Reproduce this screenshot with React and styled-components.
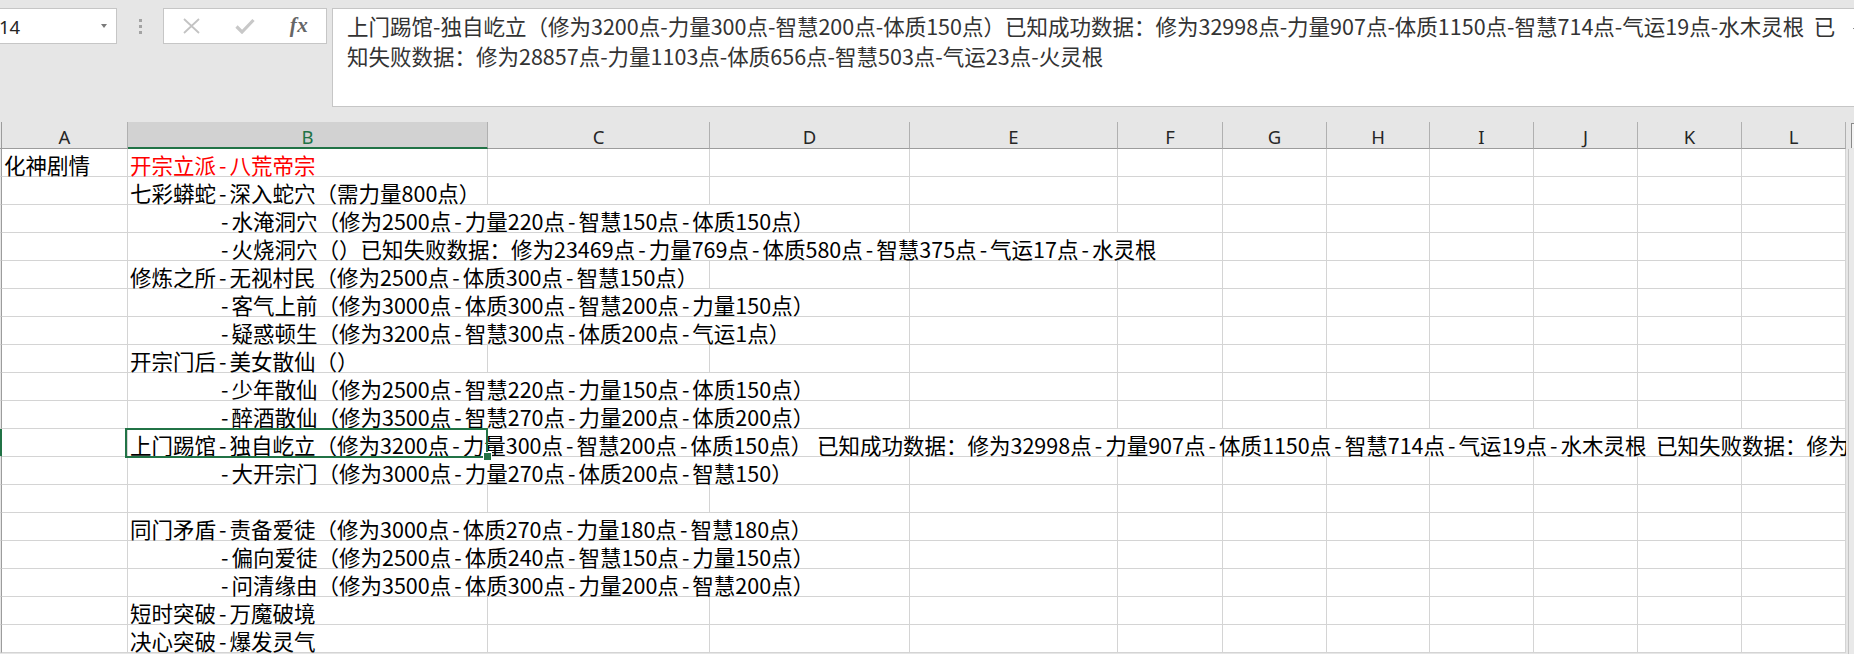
import React from "react";
import styled, { createGlobalStyle } from "styled-components";

const GlobalStyle = createGlobalStyle`
  html, body { margin: 0; padding: 0; background: #e6e6e6; }
  body { font-family: "Noto Sans CJK SC", "Noto Sans", sans-serif; }
  * { box-sizing: border-box; }
`;

const COLS = "2px 126px 360px 222px 200px 208px 105px 104px 103px 104px 104px 104px 104px";
const LETTERS = ["A", "B", "C", "D", "E", "F", "G", "H", "I", "J", "K", "L"];
const GREEN = "#217346";

const Page = styled.div`
  width: 1854px;
  height: 654px;
  overflow: hidden;
  background: #e6e6e6;
  display: flex;
  flex-direction: column;
`;

const TopBar = styled.div`
  height: 122px;
  flex: none;
  display: flex;
  align-items: flex-start;
  padding-top: 8px;
`;

const NameBox = styled.div`
  width: 117px;
  height: 36px;
  flex: none;
  background: #fff;
  border: 1px solid #c6c6c6;
  border-left: none;
  display: flex;
  align-items: center;
  justify-content: space-between;
  padding-right: 9px;
  font-family: "Noto Sans", sans-serif;
  font-size: 18.5px;
  color: #262626;
`;

const NameText = styled.span`
  margin-left: -1px;
`;

const DropArrow = styled.span`
  width: 0;
  height: 0;
  border-left: 3.5px solid transparent;
  border-right: 3.5px solid transparent;
  border-top: 4px solid #7a7a7a;
`;

const Grip = styled.div`
  width: 46px;
  height: 36px;
  flex: none;
  display: flex;
  flex-direction: column;
  align-items: center;
  justify-content: center;
  gap: 3px;
`;

const GripDot = styled.span`
  width: 3px;
  height: 3px;
  background: #a3a3a3;
`;

const FxBox = styled.div`
  width: 164px;
  height: 36px;
  flex: none;
  background: #fff;
  border: 1px solid #c6c6c6;
  display: grid;
  grid-template-columns: repeat(3, 1fr);
  align-items: center;
  justify-items: center;
`;

const FxLabel = styled.span`
  font-family: "Liberation Serif", "DejaVu Serif", serif;
  font-style: italic;
  font-weight: 700;
  font-size: 21px;
  color: #666;
  letter-spacing: 0.5px;
  margin-top: -2px;
`;

const FormulaBox = styled.div`
  flex: 1;
  height: 99px;
  margin-left: 5px;
  margin-right: -4px;
  background: #fff;
  border: 1px solid #c6c6c6;
  padding: 2px 0 0 14px;
  overflow: hidden;
  display: flex;
`;

const FormulaText = styled.div`
  flex: 1;
  font-family: "Noto Sans CJK SC", sans-serif;
  font-size: 21.5px;
  line-height: 29.5px;
  color: #333;
  white-space: pre;
  overflow: hidden;
`;

const FormulaScroll = styled.div`
  width: 10px;
  flex: none;
  padding-top: 17px;
  display: flex;
  justify-content: flex-end;
`;

const ScrollTick = styled.span`
  width: 4px;
  height: 1px;
  background: #8a8a8a;
`;

const SheetArea = styled.div`
  flex: 1;
  display: flex;
  min-height: 0;
`;

const Sheet = styled.div`
  width: 1846px;
  flex: none;
  overflow: hidden;
  display: flex;
  flex-direction: column;
`;

const HeaderRow = styled.div`
  display: grid;
  grid-template-columns: ${COLS};
  grid-template-rows: 27px;
  height: 27px;
  flex: none;
`;

const ColHeader = styled.div`
  background: ${(p) => (p.$active ? "#d2d2d2" : "#e6e6e6")};
  border-right: 1px solid #b0b0b0;
  border-bottom: ${(p) => (p.$active ? `2px solid ${GREEN}` : "1px solid #9c9c9c")};
  text-align: center;
  font-family: "Noto Sans", sans-serif;
  font-size: 18.5px;
  line-height: 23px;
  padding-top: 3px;
  overflow: hidden;
  color: ${(p) => (p.$active ? GREEN : "#262626")};
`;

const RowStub = styled.div`
  background: ${(p) => (p.$active ? GREEN : "#e6e6e6")};
  border-right: 1px solid ${(p) => (p.$active ? GREEN : "#9c9c9c")};
  border-bottom: 1px solid ${(p) => (p.$header ? "#9c9c9c" : "#d4d4d4")};
`;

const BodyRow = styled.div`
  display: grid;
  grid-template-columns: ${COLS};
  grid-template-rows: 28px;
  height: 28px;
  flex: none;
`;

const Cell = styled.div`
  grid-column: span ${(p) => p.$span || 1};
  position: relative;
  min-width: 0;
  height: 28px;
  background: #fff;
  border-right: 1px solid #d4d4d4;
  border-bottom: 1px solid #d4d4d4;
  padding: 2.5px 0 0 ${(p) => (p.$indent ? 90 : 2)}px;
  font-family: "Noto Sans CJK SC", sans-serif;
  font-size: 21.5px;
  line-height: 25px;
  color: ${(p) => (p.$red ? "#ff0000" : "#000")};
  white-space: pre;
`;

const Dash = styled.span`
  display: inline-block;
  width: 13.5px;
  text-align: center;
`;

const SelectionFrame = styled.div`
  position: absolute;
  top: -1px;
  left: -3px;
  width: 363px;
  height: 30px;
  border: 2px solid ${GREEN};
  z-index: 3;
  pointer-events: none;
`;

const FillHandle = styled.span`
  position: absolute;
  left: 357px;
  top: 23px;
  width: 7px;
  height: 7px;
  background: ${GREEN};
  box-shadow: 0 0 0 1px #fff;
`;

const VScroll = styled.div`
  flex: 1;
  display: flex;
  flex-direction: column;
  background: #e6e6e6;
`;

const VScrollHead = styled.div`
  height: 27px;
  flex: none;
  padding: 1px 0 0 5px;
`;

const VScrollButton = styled.div`
  height: 25px;
  border-left: 1px solid #8a8a8a;
  border-top: 1px solid #8a8a8a;
  background: #f4f4f4;
`;

const VScrollTrack = styled.div`
  flex: 1;
  margin-left: 2px;
  border-left: 1px solid #c4c4c4;
  background: #e9e9e9;
`;

const CrossIcon = () => (
  <svg width="19" height="16" viewBox="0 0 19 16">
    <path d="M2 1 L17 15 M17 1 L2 15" stroke="#c3c3c3" strokeWidth="1.8" fill="none" />
  </svg>
);

const CheckIcon = () => (
  <svg width="20" height="16" viewBox="0 0 20 16">
    <path d="M1.5 8.5 L7 14 L18.5 2" stroke="#c8c8c8" strokeWidth="3.2" fill="none" />
  </svg>
);

const withDashes = (s) => {
  const parts = s.split("-");
  const out = [];
  parts.forEach((p, i) => {
    if (i > 0) out.push(<Dash key={`d${i}`}>-</Dash>);
    if (p) out.push(<React.Fragment key={`t${i}`}>{p}</React.Fragment>);
  });
  return out;
};

const ROWS = [
  { a: "化神剧情", b: "开宗立派-八荒帝宗", span: 1, red: true },
  { b: "七彩蟒蛇-深入蛇穴（需力量800点）", span: 1 },
  { b: "-水淹洞穴（修为2500点-力量220点-智慧150点-体质150点）", span: 3, indent: true },
  { b: "-火烧洞穴（）已知失败数据：修为23469点-力量769点-体质580点-智慧375点-气运17点-水灵根", span: 5, indent: true },
  { b: "修炼之所-无视村民（修为2500点-体质300点-智慧150点）", span: 2 },
  { b: "-客气上前（修为3000点-体质300点-智慧200点-力量150点）", span: 3, indent: true },
  { b: "-疑惑顿生（修为3200点-智慧300点-体质200点-气运1点）", span: 3, indent: true },
  { b: "开宗门后-美女散仙（）", span: 1 },
  { b: "-少年散仙（修为2500点-智慧220点-力量150点-体质150点）", span: 3, indent: true },
  { b: "-醉酒散仙（修为3500点-智慧270点-力量200点-体质200点）", span: 3, indent: true },
  {
    b: "上门踢馆-独自屹立（修为3200点-力量300点-智慧200点-体质150点） 已知成功数据：修为32998点-力量907点-体质1150点-智慧714点-气运19点-水木灵根  已知失败数据：修为28857点-力量1103点-体质656点-智慧503点-气运23点-火灵根",
    span: 11,
    selected: true,
  },
  { b: "-大开宗门（修为3000点-力量270点-体质200点-智慧150）", span: 3, indent: true },
  { b: "", span: 1 },
  { b: "同门矛盾-责备爱徒（修为3000点-体质270点-力量180点-智慧180点）", span: 3 },
  { b: "-偏向爱徒（修为2500点-体质240点-智慧150点-力量150点）", span: 3, indent: true },
  { b: "-问清缘由（修为3500点-体质300点-力量200点-智慧200点）", span: 3, indent: true },
  { b: "短时突破-万魔破境", span: 1 },
  { b: "决心突破-爆发灵气", span: 1 },
];

export default function App() {
  return (
    <Page>
      <GlobalStyle />
      <TopBar>
        <NameBox>
          <NameText>14</NameText>
          <DropArrow />
        </NameBox>
        <Grip>
          <GripDot />
          <GripDot />
          <GripDot />
        </Grip>
        <FxBox>
          <CrossIcon />
          <CheckIcon />
          <FxLabel>fx</FxLabel>
        </FxBox>
        <FormulaBox>
          <FormulaText>
            {"上门踢馆-独自屹立（修为3200点-力量300点-智慧200点-体质150点）已知成功数据：修为32998点-力量907点-体质1150点-智慧714点-气运19点-水木灵根  已"}
            <br />
            {"知失败数据：修为28857点-力量1103点-体质656点-智慧503点-气运23点-火灵根"}
          </FormulaText>
          <FormulaScroll>
            <ScrollTick />
          </FormulaScroll>
        </FormulaBox>
      </TopBar>
      <SheetArea>
        <Sheet>
          <HeaderRow>
            <RowStub $header />
            {LETTERS.map((l) => (
              <ColHeader key={l} $active={l === "B"}>
                {l}
              </ColHeader>
            ))}
          </HeaderRow>
          {ROWS.map((r, i) => (
            <BodyRow key={i}>
              <RowStub $active={r.selected} />
              <Cell>{r.a || ""}</Cell>
              <Cell $span={r.span} $indent={r.indent} $red={r.red}>
                {withDashes(r.b)}
                {r.selected && (
                  <SelectionFrame>
                    <FillHandle />
                  </SelectionFrame>
                )}
              </Cell>
              {Array.from({ length: 11 - r.span }).map((_, k) => (
                <Cell key={k} />
              ))}
            </BodyRow>
          ))}
        </Sheet>
        <VScroll>
          <VScrollHead>
            <VScrollButton />
          </VScrollHead>
          <VScrollTrack />
        </VScroll>
      </SheetArea>
    </Page>
  );
}
